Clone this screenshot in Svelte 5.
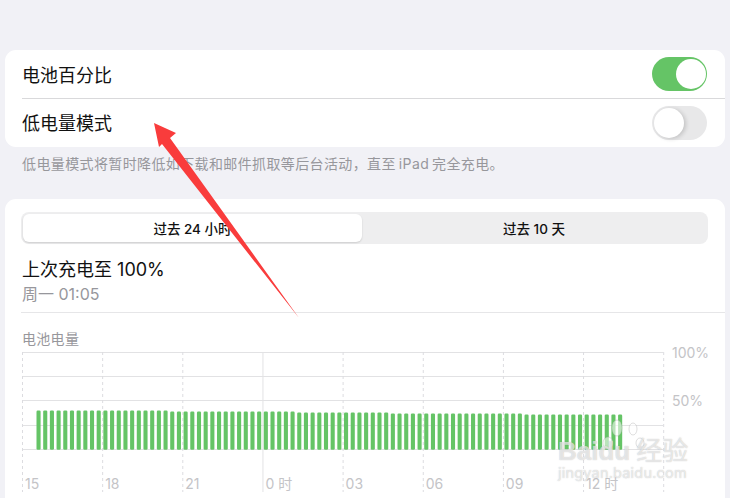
<script>
	const hours = ['15', '18', '21', '0 时', '03', '06', '09', '12 时'];
	const step = 80.15;
	const ticks = Array.from({ length: 9 }, (_, i) => 22.5 + i * step);
	const lines = [376.5, 400.5, 425.5, 449.5];

	function barTop(i) {
		if (i < 20) return 410.5;
		if (i < 39) return 411.5;
		if (i < 53) return 412.5;
		if (i < 73) return 413.5;
		return 414.5;
	}
	const bars = Array.from({ length: 88 }, (_, i) => ({ x: 36.5 + i * 6.685, top: barTop(i) }));
</script>

<div class="page">
	<section class="card first">
		<div class="row">
			<span>电池百分比</span>
			<div class="toggle on"><i></i></div>
		</div>
		<div class="row">
			<span class="label-low">低电量模式</span>
			<div class="toggle"><i></i></div>
		</div>
	</section>
	<p class="note">低电量模式将暂时降低如下载和邮件抓取等后台活动，直至&thinsp;iPad&thinsp;完全充电。</p>

	<section class="card second">
		<div class="segments">
			<div class="seg active">过去 24 小时</div>
			<div class="seg">过去 10 天</div>
		</div>
		<div class="charge">
			<h2>上次充电至 100%</h2>
			<p>周一 01:05</p>
		</div>
		<div class="chart-head">电池电量</div>
		<div class="chart">
			<svg width="720" height="150" viewBox="5 348 720 150">
				<line class="top" x1="22" x2="663" y1="352.5" y2="352.5" />
				{#each lines as y}
					<line class="grid" x1="22" x2="663" y1={y} y2={y} />
				{/each}
				{#each ticks as x, i}
					<line class={i === 3 ? 'grid' : 'dash'} x1={x} x2={x} y1="352" y2="492" />
				{/each}
				{#each bars as b}
					<rect class="bar" x={b.x} y={b.top} width="4.1" height={449.8 - b.top} rx="1.2" />
				{/each}
			</svg>
			<div class="pct p100">100%</div>
			<div class="pct p50">50%</div>
			<div class="hours">
				{#each hours as h}
					<span>{h}</span>
				{/each}
			</div>
		</div>
	</section>

	<svg class="arrow" width="730" height="498" viewBox="0 0 730 498">
		<polygon points="154,123 176,133 170,138 299,318 162,144 159,147" />
	</svg>

	<div class="mark">
		<svg width="60" height="50" viewBox="0 0 60 50">
			<ellipse cx="19" cy="12" rx="5" ry="8" />
			<ellipse cx="10" cy="27" rx="5" ry="6" />
			<ellipse cx="35" cy="13" rx="4" ry="6" />
			<ellipse cx="42" cy="27" rx="4" ry="5" />
		</svg>
		<div class="brand"><b>Baidu</b><span>经验</span></div>
		<div class="url">jingyan.baidu.com</div>
	</div>
</div>

<style>
	:global(body) {
		margin: 0;
		background: #f1f1f6;
	}

	.page {
		position: relative;
		width: 730px;
		height: 498px;
		overflow: hidden;
		padding-top: 50px;
		box-sizing: border-box;
		background: #f1f1f6;
		font-family: Inter, 'Noto Sans CJK SC', sans-serif;
		color: #111;
	}

	.card {
		margin: 0 5px;
		background: #fff;
		border-radius: 11px;
	}

	.first {
		height: 97px;
		padding-left: 17px;
	}

	.row {
		display: flex;
		align-items: center;
		justify-content: space-between;
		height: 48px;
		box-sizing: border-box;
		padding-right: 18px;
		font-size: 18px;
	}

	.row + .row {
		height: 49px;
		border-top: 1px solid #d9d9db;
	}

	.label-low {
		margin-bottom: 2px;
	}

	.toggle {
		width: 55px;
		height: 34px;
		box-sizing: border-box;
		display: flex;
		align-items: center;
		padding: 0 2px;
		border-radius: 17px;
		background: #e8e8e9;
	}

	.toggle i {
		width: 30px;
		height: 30px;
		border-radius: 50%;
		background: #fff;
		box-shadow: 2px 1px 4px rgba(0, 0, 0, 0.16);
	}

	.toggle.on {
		justify-content: flex-end;
		padding-right: 1px;
		background: #65c466;
	}

	.toggle.on i {
		box-shadow: none;
	}

	.note {
		margin: 7px 0 0 22px;
		height: 45px;
		font-size: 14px;
		line-height: 20px;
		letter-spacing: 0.38px;
		color: #97979c;
	}

	.second {
		height: 320px;
		padding: 13px 0 0 16px;
	}

	.segments {
		display: flex;
		width: 687px;
		height: 32px;
		padding: 2px;
		box-sizing: border-box;
		border-radius: 8px;
		background: #eeeeef;
	}

	.seg {
		flex: 1;
		display: flex;
		align-items: center;
		justify-content: center;
		border-radius: 6px;
		font-size: 13.5px;
		font-weight: 500;
	}

	.seg.active {
		flex: 0 0 339px;
		background: #fff;
		box-shadow: 0 1px 2px rgba(0, 0, 0, 0.14);
	}

	.charge {
		height: 69px;
		box-sizing: border-box;
		padding: 14px 0 0 1px;
		border-bottom: 1px solid #e6e6e8;
	}

	.charge h2 {
		margin: 0;
		font-size: 18px;
		font-weight: 400;
		line-height: 24px;
	}

	.charge p {
		margin: 0;
		font-size: 16px;
		line-height: 24px;
		color: #97979c;
	}

	.chart-head {
		height: 35px;
		padding: 16px 0 0 1px;
		box-sizing: border-box;
		font-size: 14px;
		line-height: 20px;
		letter-spacing: 0.3px;
		color: #97979c;
	}

	.chart {
		position: relative;
		margin-left: -16px;
		height: 150px;
	}

	.chart svg {
		display: block;
	}

	line {
		stroke-width: 1;
	}

	.top,
	.grid {
		stroke: #e2e2e4;
	}

	.dash {
		stroke: #dcdce0;
		stroke-dasharray: 3 3;
	}

	.bar {
		fill: #65c466;
	}

	.pct {
		position: absolute;
		left: 667px;
		font-size: 14px;
		line-height: 18px;
		color: #c4c4c7;
	}

	.p100 {
		top: -4px;
	}

	.p50 {
		top: 44px;
	}

	.hours {
		position: absolute;
		left: 20px;
		top: 128px;
		display: grid;
		grid-template-columns: repeat(8, 80.15px);
		font-size: 14px;
		line-height: 16px;
		color: #c4c4c7;
	}

	.arrow {
		position: absolute;
		left: 0;
		top: 0;
	}

	.arrow polygon {
		fill: #f93c3c;
	}

	.mark {
		position: absolute;
		left: 558px;
		top: 416px;
		width: 140px;
		color: rgba(255, 255, 255, 0.62);
		text-shadow: 0 0 1px rgba(120, 120, 120, 0.5);
	}

	.mark svg {
		position: absolute;
		left: 40px;
		top: 0;
	}

	.mark ellipse {
		fill: rgba(255, 255, 255, 0.55);
		stroke: rgba(160, 160, 160, 0.35);
	}

	.brand {
		position: relative;
		display: flex;
		align-items: baseline;
		gap: 6px;
		padding-top: 20px;
		font-size: 26px;
		line-height: 30px;
	}

	.brand b {
		font-family: 'Liberation Sans', sans-serif;
	}

	.url {
		position: relative;
		margin-top: -1px;
		font-size: 14.5px;
		line-height: 16px;
		letter-spacing: 0.2px;
	}
</style>
